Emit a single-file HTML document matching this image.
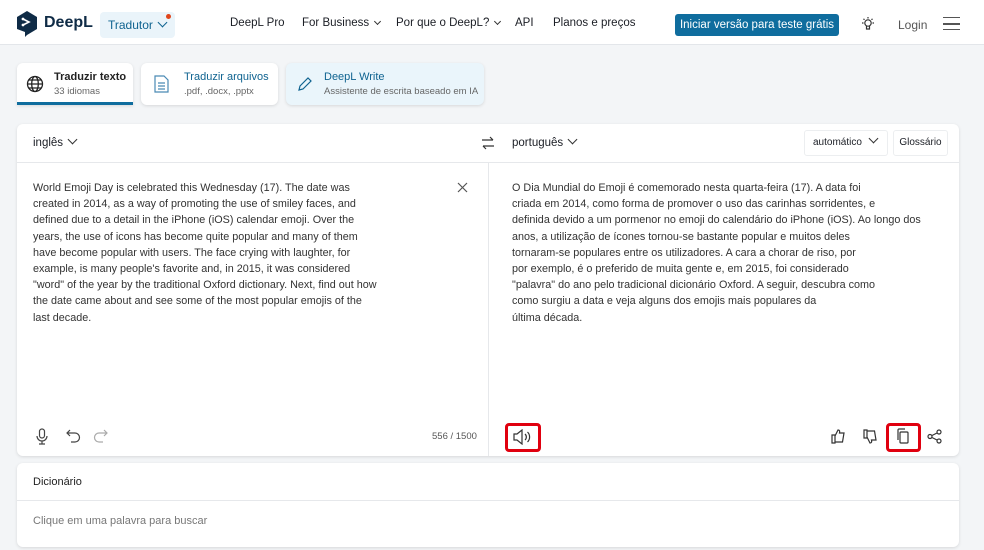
<!DOCTYPE html>
<html><head><meta charset="utf-8"><style>
*{box-sizing:border-box;margin:0;padding:0}
body{width:984px;height:550px;overflow:hidden;background:#f3f5f7;font-family:"Liberation Sans",sans-serif;color:#1b1e25;position:relative}
.hdr{position:absolute;left:0;top:0;width:984px;height:45px;background:#fff;border-bottom:1px solid #e3e6ea}
.a{position:absolute;white-space:nowrap}
.card{position:absolute;background:#fff;border-radius:6px;box-shadow:0 1px 3px rgba(0,0,0,.12)}
.txt{font-size:10.8px;line-height:16.2px;color:#333}
.chev{display:inline-block;width:7px;height:7px;border-right:1.3px solid #333;border-bottom:1.3px solid #333;transform:rotate(45deg);margin-left:6px;position:relative;top:-3px}
.red{position:absolute;border:3px solid #e0000f;border-radius:4px}
</style></head><body>
<div class="hdr">
 <svg class="a" style="left:16px;top:11px" width="22" height="26" viewBox="0 0 22 26"><path d="M11 0L21 6V18L11 24L9 26V21L1 18V6Z" fill="#0f2b46"/><path d="M7 8l6 3-6 3" stroke="#fff" stroke-width="1.6" fill="none"/><circle cx="7" cy="8" r="1.4" fill="#fff"/><circle cx="7" cy="14" r="1.4" fill="#fff"/></svg>
 <div class="a" style="left:44px;top:14px;font-size:16px;font-weight:bold;color:#0f2b46">DeepL</div>
 <div class="a" style="left:100px;top:12px;width:75px;height:26px;background:#eaf4fa;border-radius:4px"></div>
 <div class="a" style="left:108px;top:18px;font-size:12px;color:#0f6390">Tradutor<span class="chev" style="border-color:#0f6390"></span></div>
 <div class="a" style="left:166px;top:14px;width:5px;height:5px;border-radius:50%;background:#e0451b"></div>
 <div class="a" style="left:230px;top:17px;font-size:11.5px">DeepL Pro</div>
 <div class="a" style="left:302px;top:17px;font-size:11.5px">For Business<span class="chev" style="width:5px;height:5px;top:-2px"></span></div>
 <div class="a" style="left:396px;top:17px;font-size:11.5px">Por que o DeepL?<span class="chev" style="width:5px;height:5px;top:-2px"></span></div>
 <div class="a" style="left:515px;top:17px;font-size:11.5px">API</div>
 <div class="a" style="left:553px;top:17px;font-size:11.5px">Planos e preços</div>
 <div class="a" style="left:675px;top:14px;width:164px;height:22px;background:#0f6d9e;border-radius:3px;color:#fff;font-size:11.5px;text-align:center;line-height:22px">Iniciar versão para teste grátis</div>
 <svg class="a" style="left:860px;top:16px" width="16" height="16" viewBox="0 0 16 16" fill="none" stroke="#333" stroke-width="1.2"><circle cx="8" cy="7" r="3.2"/><path d="M6.5 10v3h3v-3M8 1v1.5M2 7h1.5M12.5 7H14M3.5 2.8l1 1M12.5 2.8l-1 1"/></svg>
 <div class="a" style="left:898px;top:18px;font-size:12px;color:#555">Login</div>
 <div class="a" style="left:943px;top:17px;width:17px;height:13px;border-top:1.5px solid #555;border-bottom:1.5px solid #555"></div>
 <div class="a" style="left:943px;top:23px;width:17px;height:1.5px;background:#555"></div>
</div>

<div class="card" style="left:17px;top:63px;width:116px;height:42px;border-bottom:3px solid #0f6d9e;border-radius:6px 6px 0 0"></div>
<svg class="a" style="left:26px;top:75px" width="18" height="18" viewBox="0 0 18 18" fill="none" stroke="#222" stroke-width="1.3"><circle cx="9" cy="9" r="7.5"/><ellipse cx="9" cy="9" rx="3.3" ry="7.5"/><path d="M1.5 9h15M3 5h12M3 13h12"/></svg>
<div class="a" style="left:54px;top:71px;font-size:11px;font-weight:bold;color:#222">Traduzir texto</div>
<div class="a" style="left:54px;top:86px;font-size:9.5px;color:#666">33 idiomas</div>

<div class="card" style="left:141px;top:63px;width:137px;height:42px"></div>
<svg class="a" style="left:154px;top:75px" width="15" height="18" viewBox="0 0 15 18" fill="none" stroke="#4a8ab5" stroke-width="1.2"><path d="M1 1h9l4 4v12H1z"/><path d="M4 8h7M4 11h7M4 14h7"/></svg>
<div class="a" style="left:184px;top:71px;font-size:11px;color:#0f6390">Traduzir arquivos</div>
<div class="a" style="left:184px;top:86px;font-size:9.5px;color:#666">.pdf, .docx, .pptx</div>

<div class="card" style="left:286px;top:63px;width:198px;height:42px;background:#eaf5fb"></div>
<svg class="a" style="left:297px;top:76px" width="16" height="16" viewBox="0 0 16 16" fill="none" stroke="#0f6390" stroke-width="1.2"><path d="M2 14l1-4 8-8 3 3-8 8z"/></svg>
<div class="a" style="left:324px;top:71px;font-size:11px;color:#0f6390">DeepL Write</div>
<div class="a" style="left:324px;top:86px;font-size:9.5px;color:#666">Assistente de escrita baseado em IA</div>

<div class="card" style="left:17px;top:124px;width:942px;height:332px"></div>
<div class="a" style="left:17px;top:162px;width:942px;height:1px;background:#e6e8eb"></div>
<div class="a" style="left:488px;top:163px;width:1px;height:293px;background:#e6e8eb"></div>
<div class="a" style="left:33px;top:137px;font-size:11.5px">inglês<span class="chev"></span></div>
<svg class="a" style="left:481px;top:136px" width="14" height="14" viewBox="0 0 14 14" fill="none" stroke="#333" stroke-width="1.2"><path d="M1 4h11M9 1l3 3M13 10H2M5 13l-3-3"/></svg>
<div class="a" style="left:512px;top:137px;font-size:11.5px">português<span class="chev"></span></div>
<div class="a" style="left:804px;top:130px;width:84px;height:26px;border:1px solid #eceef0;border-radius:3px;font-size:10px;line-height:24px;padding-left:8px">automático<span class="chev" style="margin-left:8px"></span></div>
<div class="a" style="left:893px;top:130px;width:55px;height:26px;border:1px solid #eceef0;border-radius:3px;font-size:10px;line-height:24px;text-align:center">Glossário</div>

<div class="a txt" style="left:33px;top:180px">World Emoji Day is celebrated this Wednesday (17). The date was<br>created in 2014, as a way of promoting the use of smiley faces, and<br>defined due to a detail in the iPhone (iOS) calendar emoji. Over the<br>years, the use of icons has become quite popular and many of them<br>have become popular with users. The face crying with laughter, for<br>example, is many people's favorite and, in 2015, it was considered<br>"word" of the year by the traditional Oxford dictionary. Next, find out how<br>the date came about and see some of the most popular emojis of the<br>last decade.</div>
<svg class="a" style="left:457px;top:182px" width="11" height="11" viewBox="0 0 11 11" stroke="#555" stroke-width="1.2"><path d="M1 1l9 9M10 1l-9 9"/></svg>
<div class="a txt" style="left:512px;top:180px">O Dia Mundial do Emoji é comemorado nesta quarta-feira (17). A data foi<br>criada em 2014, como forma de promover o uso das carinhas sorridentes, e<br>definida devido a um pormenor no emoji do calendário do iPhone (iOS). Ao longo dos<br>anos, a utilização de ícones tornou-se bastante popular e muitos deles<br>tornaram-se populares entre os utilizadores. A cara a chorar de riso, por<br>por exemplo, é o preferido de muita gente e, em 2015, foi considerado<br>"palavra" do ano pelo tradicional dicionário Oxford. A seguir, descubra como<br>como surgiu a data e veja alguns dos emojis mais populares da<br>última década.</div>

<svg class="a" style="left:35px;top:428px" width="14" height="17" viewBox="0 0 14 17" fill="none" stroke="#444" stroke-width="1.2"><rect x="4.5" y="1" width="5" height="9" rx="2.5"/><path d="M2 8a5 5 0 0010 0M7 13v3M4 16h6"/></svg>
<svg class="a" style="left:66px;top:429px" width="15" height="14" viewBox="0 0 15 14" fill="none" stroke="#444" stroke-width="1.2"><path d="M4 1L1 4l3 3M1 4h8a4.5 4.5 0 010 9H5"/></svg>
<svg class="a" style="left:93px;top:429px" width="15" height="14" viewBox="0 0 15 14" fill="none" stroke="#aaa" stroke-width="1.2"><path d="M11 1l3 3-3 3M14 4H6a4.5 4.5 0 000 9h4"/></svg>
<div class="a" style="left:432px;top:431px;font-size:9.5px;color:#555">556 / 1500</div>

<div class="red" style="left:505px;top:423px;width:36px;height:29px"></div>
<svg class="a" style="left:513px;top:429px" width="18" height="16" viewBox="0 0 18 16" fill="none" stroke="#333" stroke-width="1.2"><path d="M1 5h3l5-4v14l-5-4H1z"/><path d="M12 5a4 4 0 010 6M14.5 3a7 7 0 010 10"/></svg>
<svg class="a" style="left:830px;top:428px" width="16" height="16" viewBox="0 0 16 16" fill="none" stroke="#333" stroke-width="1.2"><path d="M2 7h3v8H2zM5 8l3-6c1.5 0 2 1 1.5 3H14l-1.5 9H5"/></svg>
<svg class="a" style="left:862px;top:429px" width="16" height="16" viewBox="0 0 16 16" fill="none" stroke="#333" stroke-width="1.2"><path d="M2 9h3V1H2zM5 8l3 6c1.5 0 2-1 1.5-3H14L12.5 2H5"/></svg>
<div class="red" style="left:886px;top:423px;width:35px;height:29px"></div>
<svg class="a" style="left:896px;top:428px" width="14" height="17" viewBox="0 0 14 17" fill="none" stroke="#333" stroke-width="1.2"><rect x="4" y="4" width="8" height="11" rx="1"/><path d="M2 12V2a1 1 0 011-1h6"/></svg>
<svg class="a" style="left:927px;top:429px" width="15" height="15" viewBox="0 0 15 15" fill="none" stroke="#333" stroke-width="1.2"><circle cx="3" cy="7.5" r="2"/><circle cx="12" cy="3" r="2"/><circle cx="12" cy="12" r="2"/><path d="M5 6.5l5-2.5M5 8.5l5 2.5"/></svg>

<div class="card" style="left:17px;top:463px;width:942px;height:84px"></div>
<div class="a" style="left:17px;top:500px;width:942px;height:1px;background:#e6e8eb"></div>
<div class="a" style="left:33px;top:476px;font-size:11px;color:#222">Dicionário</div>
<div class="a" style="left:33px;top:515px;font-size:11px;color:#777">Clique em uma palavra para buscar</div>
</body></html>
